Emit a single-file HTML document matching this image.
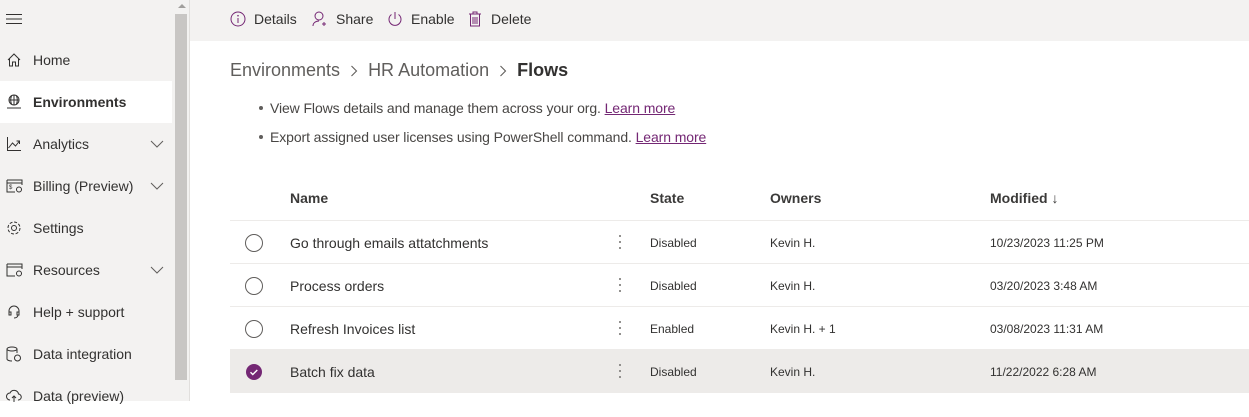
<!DOCTYPE html>
<html><head><meta charset="utf-8"><style>
*{margin:0;padding:0;box-sizing:border-box}
body{width:1249px;height:401px;overflow:hidden;font-family:"Liberation Sans",sans-serif;color:#323130;background:#fff;position:relative}
.side{position:absolute;left:0;top:0;width:173px;height:401px;background:#f3f2f1}
.sb{position:absolute;left:173px;top:0;width:16px;height:401px;background:#f3f2f1}
.thumb{position:absolute;left:175px;top:14px;width:12px;height:366px;background:#c8c6c4}
.vline{position:absolute;left:189px;top:0;width:1px;height:401px;background:#e1dfdd}
.nav{position:absolute;left:0;width:172px;height:42px;font-size:14px;display:flex;align-items:center}
.nav svg{position:absolute;left:6px}
.nav span{position:absolute;left:33px}
.nav .chev{position:absolute;left:150px}
.sel{background:#fff;font-weight:bold}
.top{position:absolute;left:190px;top:0;width:1059px;height:41px;background:#f3f2f1;font-size:14px}
.top .b{position:absolute;top:11px;display:flex;align-items:center}
.bc{position:absolute;top:60px;left:230px;font-size:18px;color:#605e5c;display:flex;align-items:center}
.bc b{color:#323130}
.bc svg{margin:0 10px}
.li{position:absolute;left:270px;font-size:14px;color:#484644;letter-spacing:-0.1px}
.li a{color:#742774;text-decoration:underline}
.dot{position:absolute;left:-11px;top:6px;width:4px;height:4px;border-radius:50%;background:#605e5c}
.row{position:absolute;left:230px;width:1019px;height:43px;border-bottom:1px solid #edebe9;font-size:14px}
.row div{position:absolute;top:14px}
.row .s{font-size:12px;top:15px}
.hdr div{font-weight:bold;font-size:14px;top:12px;color:#3b3a39}
.rad{position:absolute;left:15px;top:13px;width:18px;height:18px;border:1px solid #605e5c;border-radius:50%}
.kb{position:absolute;left:389px;top:12px;width:2px;height:16px;background:radial-gradient(circle,#8a8886 1px,transparent 1.2px) 0 0/2px 6px}
</style></head><body>
<div class="side"></div><div class="sb"></div><div class="thumb"></div><div class="vline"></div>
<div style="position:absolute;left:178px;top:4px;width:0;height:0;border-left:4px solid transparent;border-right:4px solid transparent;border-bottom:4px solid #a19f9d"></div>
<svg style="position:absolute;left:6px;top:13px" width="16" height="12"><path d="M0 1.5H16M0 6H16M0 10.5H16" stroke="#323130" stroke-width="1"/></svg>

<div class="nav" style="top:39px"><svg width="16" height="16"><path d="M2 8L8 2l6 6M3.5 6.5V14h3v-4h3v4h3V6.5" fill="none" stroke="#323130"/></svg><span>Home</span></div>
<div class="nav sel" style="top:81px"><svg width="16" height="16"><circle cx="8" cy="6" r="5" fill="none" stroke="#323130"/><path d="M3 6h10M8 1v10M5.5 2c-1 2.5-1 5.5 0 8M10.5 2c1 2.5 1 5.5 0 8M1 14h14" fill="none" stroke="#323130"/></svg><span>Environments</span></div>
<div class="nav" style="top:123px"><svg width="16" height="16"><path d="M1.5 1v13.5H15M2.5 12l4-5 3 3 4-5M10.5 5h3v3" fill="none" stroke="#323130"/></svg><span>Analytics</span><svg class="chev" width="14" height="14"><path d="M1 4l6 6 6-6" fill="none" stroke="#605e5c"/></svg></div>
<div class="nav" style="top:165px"><svg width="18" height="16"><path d="M1 2h15v5M1 2v12h8M1 5h15" fill="none" stroke="#323130"/><circle cx="13" cy="11.5" r="2.5" fill="none" stroke="#323130"/><text x="3" y="11" font-size="6" fill="#323130">$</text></svg><span>Billing (Preview)</span><svg class="chev" width="14" height="14"><path d="M1 4l6 6 6-6" fill="none" stroke="#605e5c"/></svg></div>
<div class="nav" style="top:207px"><svg width="16" height="16"><circle cx="8" cy="8" r="2.5" fill="none" stroke="#323130"/><circle cx="8" cy="8" r="6" fill="none" stroke="#323130" stroke-dasharray="3 1.7"/></svg><span>Settings</span></div>
<div class="nav" style="top:249px"><svg width="18" height="16"><path d="M1 2h15v5M1 2v12h8M1 5h15" fill="none" stroke="#323130"/><circle cx="13" cy="11.5" r="2.5" fill="none" stroke="#323130"/></svg><span>Resources</span><svg class="chev" width="14" height="14"><path d="M1 4l6 6 6-6" fill="none" stroke="#605e5c"/></svg></div>
<div class="nav" style="top:291px"><svg width="16" height="16"><path d="M3 9V7a5 5 0 0110 0v2M3 8v3h2V8zM11 8v3h2V8zM12 11c0 2-2 3-4 3" fill="none" stroke="#323130"/></svg><span>Help + support</span></div>
<div class="nav" style="top:333px"><svg width="16" height="16"><ellipse cx="6" cy="3" rx="5" ry="2" fill="none" stroke="#323130"/><path d="M1 3v10c0 1 2 2 5 2M11 3v4" fill="none" stroke="#323130"/><circle cx="11.5" cy="12" r="3" fill="none" stroke="#323130"/></svg><span>Data integration</span></div>
<div class="nav" style="top:375px"><svg width="16" height="16"><path d="M4 12a3.5 3.5 0 010-7 4.5 4.5 0 018.5 1A3 3 0 0112 12M8 14V8M6 10l2-2 2 2" fill="none" stroke="#323130"/></svg><span>Data (preview)</span></div>

<div class="top">
<div class="b" style="left:40px"><svg width="16" height="16" style="margin-right:8px"><circle cx="8" cy="8" r="7" fill="none" stroke="#742774"/><path d="M8 7v5" stroke="#742774"/><circle cx="8" cy="4.7" r=".8" fill="#742774"/></svg>Details</div>
<div class="b" style="left:122px"><svg width="18" height="16" style="margin-right:6px"><circle cx="7" cy="5" r="4" fill="none" stroke="#742774"/><path d="M1 15c0-3 2.5-5 6-5M12 11v4M10 13h4" fill="none" stroke="#742774"/></svg>Share</div>
<div class="b" style="left:197px"><svg width="16" height="16" style="margin-right:8px"><path d="M8 1v7M4.5 3.5a6 6 0 107 0" fill="none" stroke="#742774"/></svg>Enable</div>
<div class="b" style="left:278px"><svg width="14" height="16" style="margin-right:9px"><path d="M1 3h12M5 3V1h4v2M2.5 3v12h9V3M5 6v7M7 6v7M9 6v7" fill="none" stroke="#742774"/></svg>Delete</div>
</div>

<div class="bc">Environments<svg width="8" height="12"><path d="M1.5 1l5 5-5 5" fill="none" stroke="#605e5c" stroke-width="1.1"/></svg>HR Automation<svg width="8" height="12"><path d="M1.5 1l5 5-5 5" fill="none" stroke="#605e5c" stroke-width="1.1"/></svg><b>Flows</b></div>
<div class="li" style="top:100px"><i class="dot"></i>View Flows details and manage them across your org. <a>Learn more</a></div>
<div class="li" style="top:129px"><i class="dot"></i>Export assigned user licenses using PowerShell command. <a>Learn more</a></div>

<div class="row hdr" style="top:178px"><div style="left:60px">Name</div><div style="left:420px">State</div><div style="left:540px">Owners</div><div style="left:760px">Modified <span style="font-weight:normal">↓</span></div></div>
<div class="row" style="top:221px"><i class="rad"></i><div style="left:60px">Go through emails attatchments</div><i class="kb"></i><div class="s" style="left:420px">Disabled</div><div class="s" style="left:540px">Kevin H.</div><div class="s" style="left:760px">10/23/2023 11:25 PM</div></div>
<div class="row" style="top:264px"><i class="rad"></i><div style="left:60px">Process orders</div><i class="kb"></i><div class="s" style="left:420px">Disabled</div><div class="s" style="left:540px">Kevin H.</div><div class="s" style="left:760px">03/20/2023 3:48 AM</div></div>
<div class="row" style="top:307px"><i class="rad"></i><div style="left:60px">Refresh Invoices list</div><i class="kb"></i><div class="s" style="left:420px">Enabled</div><div class="s" style="left:540px">Kevin H. + 1</div><div class="s" style="left:760px">03/08/2023 11:31 AM</div></div>
<div class="row" style="top:350px;background:#edebe9;border:none"><svg style="position:absolute;left:15px;top:13px" width="18" height="18"><circle cx="9" cy="9" r="8" fill="#742774"/><path d="M5.5 9.2l2.3 2.3 4.5-4.5" fill="none" stroke="#fff" stroke-width="1.4"/></svg><div style="left:60px">Batch fix data</div><i class="kb"></i><div class="s" style="left:420px">Disabled</div><div class="s" style="left:540px">Kevin H.</div><div class="s" style="left:760px">11/22/2022 6:28 AM</div></div>
</body></html>
